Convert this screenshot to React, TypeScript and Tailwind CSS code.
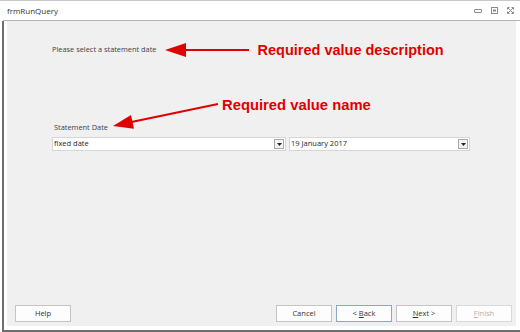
import React from 'react';

const ui = { fontFamily: '"Open Sans", "Noto Sans", sans-serif' };
const callout = { fontFamily: '"Liberation Sans", Arial, sans-serif' };

const DropButton = () => (
  <div className="w-[10px] h-[10px] mr-[1px] border border-[#a8a8a8] bg-[#f4f4f4] flex items-center justify-center">
    <svg width="5" height="3" viewBox="0 0 5 3">
      <path d="M0 0 H5 L2.5 3 Z" fill="#222" />
    </svg>
  </div>
);

const Combo = ({ value, width }: { value: string; width: string }) => (
  <div className={`${width} h-[14px] bg-white border border-[#d6d6d6] flex items-center justify-between`}>
    <span className="pl-[1px] text-[7.5px] leading-none text-[#1e1e1e]" style={ui}>
      {value}
    </span>
    <DropButton />
  </div>
);

const WizardButton = ({
  children,
  variant = 'normal',
}: {
  children: React.ReactNode;
  variant?: 'normal' | 'default' | 'disabled';
}) => {
  const border =
    variant === 'default' ? 'border-[#8aa9c9]' : variant === 'disabled' ? 'border-[#d9d9d9]' : 'border-[#c4c4c4]';
  const text = variant === 'disabled' ? 'text-[#b0b0b0]' : 'text-[#333]';
  return (
    <div
      className={`w-[56px] h-[17px] bg-[#fdfdfd] border ${border} ${text} flex items-center justify-center text-[7.5px] leading-none`}
      style={ui}
    >
      <span className="whitespace-pre">{children}</span>
    </div>
  );
};

export default function App() {
  return (
    <div className="w-[520px] h-[332px] bg-white flex flex-col border-t border-[#c8c8c8] overflow-hidden">
      {/* title bar */}
      <div className="h-[20px] flex items-center justify-between pl-[7px] pr-[6px] border-b border-[#b4b4b4] ml-[3px]">
        <span className="text-[8px] leading-none text-[#333] -ml-[3px]" style={ui}>
          frmRunQuery
        </span>
        <div className="flex items-center gap-[9px]">
          <svg width="8" height="4" viewBox="0 0 8 4">
            <rect x="0.5" y="0.5" width="7" height="3" rx="0.5" fill="none" stroke="#8a8a8a" />
          </svg>
          <svg width="7" height="7" viewBox="0 0 7 7">
            <rect x="0.5" y="0.5" width="6" height="6" fill="none" stroke="#8a8a8a" />
            <rect x="2" y="2.5" width="3" height="2" fill="#8a8a8a" />
          </svg>
          <svg width="7" height="7" viewBox="0 0 7 7">
            <path d="M1 1 L6 6 M6 1 L1 6" stroke="#8a8a8a" strokeWidth="1" />
            <path d="M0.5 2.5 V0.5 H2.5 M4.5 0.5 H6.5 V2.5 M6.5 4.5 V6.5 H4.5 M2.5 6.5 H0.5 V4.5" fill="none" stroke="#8a8a8a" />
          </svg>
        </div>
      </div>

      {/* window body */}
      <div className="flex-1 flex flex-col ml-[2px] border-l-2 border-b-2 border-[#6e6e6e] pl-[3px] pr-[4px] pb-[4px]">
        <div className="flex-1 relative bg-[#f0f0f0] flex flex-col">
          {/* description + callout */}
          <div className="mt-[21px] ml-[45px] h-[16px] flex items-center">
            <span className="text-[7.4px] leading-none text-[#3a3f4a]" style={ui}>
              Please select a statement date
            </span>
            <svg className="ml-[8px]" width="84" height="16" viewBox="0 0 84 16">
              <path d="M0 8 L21 1 L21 15 Z" fill="#e00000" />
              <rect x="18" y="7" width="66" height="2" fill="#e00000" />
            </svg>
            <span className="ml-[9px] text-[14.5px] font-bold leading-none text-[#e00000]" style={callout}>
              Required value description
            </span>
          </div>

          {/* name callout */}
          <div className="mt-[39px] ml-[215px] h-[16px] flex items-center">
            <span className="text-[14.8px] font-bold leading-none text-[#e00000]" style={callout}>
              Required value name
            </span>
          </div>

          {/* diagonal arrow */}
          <svg className="absolute left-0 top-0 pointer-events-none" width="230" height="120" viewBox="0 0 230 120">
            <line x1="211" y1="83" x2="122" y2="101.5" stroke="#e00000" strokeWidth="2" />
            <path d="M106 105 L127 107.8 L124 94 Z" fill="#e00000" />
          </svg>

          <div className="mt-[10px] ml-[47px] h-[10px] flex items-center">
            <span className="text-[7.4px] leading-none text-[#3a3f4a]" style={ui}>
              Statement Date
            </span>
          </div>

          <div className="mt-[4px] ml-[45px] flex gap-[3px]">
            <Combo value="fixed date" width="w-[234px]" />
            <Combo value="19 January 2017" width="w-[181px]" />
          </div>

          {/* wizard buttons */}
          <div className="mt-auto mb-[4px] pl-[8px] pr-[4px] flex items-center justify-between">
            <WizardButton>Help</WizardButton>
            <div className="flex gap-[4px]">
              <WizardButton>Cancel</WizardButton>
              <WizardButton variant="default">
                {'< '}
                <span className="underline">B</span>ack
              </WizardButton>
              <WizardButton>
                <span className="underline">N</span>
                {'ext >'}
              </WizardButton>
              <WizardButton variant="disabled">
                <span className="underline">F</span>inish
              </WizardButton>
            </div>
          </div>
        </div>
      </div>
    </div>
  );
}
